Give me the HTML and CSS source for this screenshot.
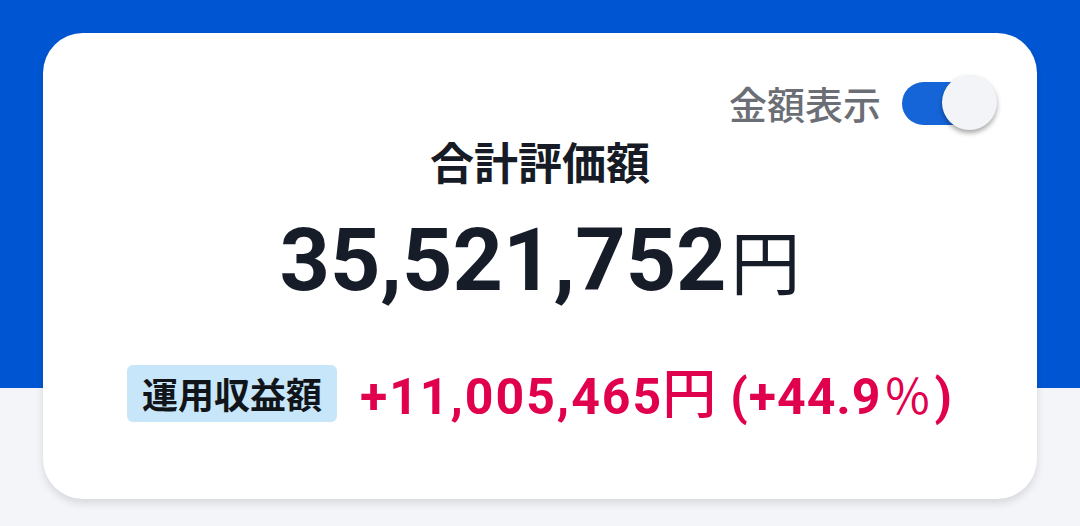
FILE: index.html
```html
<!DOCTYPE html>
<html lang="ja">
<head>
<meta charset="utf-8">
<link rel="stylesheet" href="styles.css">
</head>
<body>
<div class="page">
  <div class="card">
    <div class="toggle-row">
      <span class="toggle-label">金額表示</span>
      <span class="switch"><span class="track"></span><span class="thumb"></span></span>
    </div>
    <div class="title">合計評価額</div>
    <div class="total"><span class="num">35,521,752</span><span class="yen">円</span></div>
    <div class="profit-row">
      <span class="badge">運用収益額</span>
      <span class="profit"><span class="num">+11,005,465</span><span class="yen">円</span><span class="pct">(+44.9<span class="pc">％</span>)</span></span>
    </div>
  </div>
</div>
</body>
</html>
```
FILE: styles.css
```css
* { box-sizing: border-box; }
html, body { margin: 0; padding: 0; }
body {
  width: 1080px;
  height: 526px;
  overflow: hidden;
  background: linear-gradient(to bottom, #0056d2 0, #0056d2 388px, #f3f5f9 388px, #f3f5f9 100%);
  font-family: Roboto, "Noto Sans CJK JP", sans-serif;
}
.page {
  padding: 33px 43px 0 43px;
}
.card {
  height: 466px;
  background: #ffffff;
  border-radius: 40px;
  box-shadow: 0 4px 8px rgba(0, 0, 0, 0.12);
  display: flex;
  flex-direction: column;
  align-items: center;
  padding: 42px 40px 0 40px;
}
.toggle-row {
  align-self: flex-end;
  display: flex;
  align-items: center;
  gap: 21px;
  height: 55px;
}
.toggle-label {
  font-family: "Noto Sans CJK JP", sans-serif;
  font-size: 38px;
  font-weight: 500;
  color: #6b6e74;
  line-height: 1;
}
.switch {
  position: relative;
  width: 95px;
  height: 55px;
  display: block;
}
.track {
  position: absolute;
  left: 0;
  top: 7px;
  width: 82px;
  height: 43px;
  border-radius: 22px;
  background: #1565d8;
}
.thumb {
  position: absolute;
  right: 0;
  top: 0;
  width: 55px;
  height: 55px;
  border-radius: 50%;
  background: #f3f4f8;
  box-shadow: 0 3px 5px rgba(0, 0, 0, 0.35);
}
.title {
  margin-top: 3px;
  font-family: "Noto Sans CJK JP", sans-serif;
  font-weight: 700;
  font-size: 44px;
  line-height: 56px;
  color: #161b26;
}
.total {
  margin-top: 27px;
  color: #161d29;
  display: flex;
  align-items: baseline;
  line-height: 1;
}
.total .num {
  font-family: Roboto, sans-serif;
  font-weight: 700;
  font-size: 88px;
}
.total .yen {
  font-family: "Noto Sans CJK JP", sans-serif;
  font-size: 70px;
  margin-left: 4px;
}
.profit-row {
  margin-top: 60px;
  display: flex;
  align-items: center;
  gap: 23px;
}
.badge {
  background: #c7e6f9;
  border-radius: 6px;
  padding: 0 15px;
  height: 57px;
  display: flex;
  align-items: center;
  font-family: "Noto Sans CJK JP", sans-serif;
  font-weight: 700;
  font-size: 36px;
  color: #111418;
}
.profit {
  color: #e0004e;
  display: flex;
  align-items: baseline;
  line-height: 1;
}
.profit .num {
  font-family: Roboto, sans-serif;
  font-weight: 700;
  font-size: 50px;
  letter-spacing: 2px;
}
.profit .yen {
  font-family: "Noto Sans CJK JP", sans-serif;
  font-size: 54px;
  font-weight: 500;
  margin-left: -1px;
}
.profit .pct {
  font-family: Roboto, sans-serif;
  font-weight: 700;
  font-size: 50px;
  letter-spacing: 1px;
  margin-left: 14px;
}
.profit .pc {
  font-family: "Noto Sans CJK JP", sans-serif;
  font-weight: 400;
  font-size: 48px;
  margin-left: 2px;
  margin-right: 2px;
}
```
